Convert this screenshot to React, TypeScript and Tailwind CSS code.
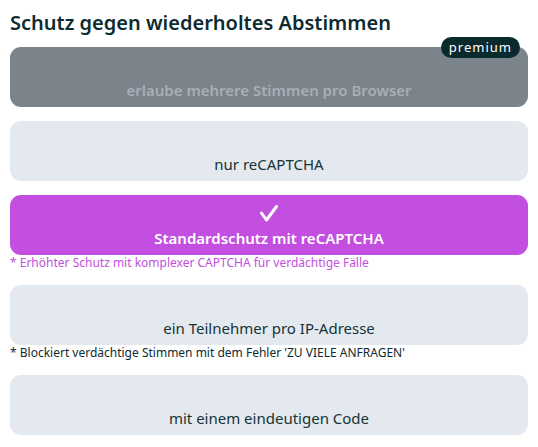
type Option = {
  label: string;
  note?: string;
  selected?: boolean;
  disabled?: boolean;
  premium?: boolean;
};

const OPTIONS: Option[] = [
  { label: "erlaube mehrere Stimmen pro Browser", disabled: true, premium: true },
  { label: "nur reCAPTCHA" },
  {
    label: "Standardschutz mit reCAPTCHA",
    selected: true,
    note: "* Erhöhter Schutz mit komplexer CAPTCHA für verdächtige Fälle",
  },
  {
    label: "ein Teilnehmer pro IP-Adresse",
    note: "* Blockiert verdächtige Stimmen mit dem Fehler 'ZU VIELE ANFRAGEN'",
  },
  { label: "mit einem eindeutigen Code" },
];

function CheckMark() {
  return (
    <svg
      viewBox="0 0 20 20"
      className="mb-[4px] h-[20px] w-[20px]"
      fill="none"
      stroke="currentColor"
      strokeWidth={3}
      strokeLinecap="round"
      strokeLinejoin="round"
    >
      <polyline points="2.5,10 7.5,17 17.5,3.5" />
    </svg>
  );
}

export default function App() {
  return (
    <div
      className="min-h-screen bg-white px-[10px] pt-[9px] text-[#0d2b30]"
      style={{ fontFamily: '"Noto Sans", "Open Sans", sans-serif' }}
    >
      <h2 className="text-[20px] font-semibold leading-[28px]">
        Schutz gegen wiederholtes Abstimmen
      </h2>

      <div className="mt-[10px] flex flex-col">
        {OPTIONS.map((opt) => (
          <div key={opt.label} className="mb-[14px]">
            <div
              className={
                "relative flex h-[60px] flex-col items-center justify-end rounded-[11px] pb-[6px] " +
                (opt.selected
                  ? "bg-[#c34fe0] text-white"
                  : opt.disabled
                  ? "bg-[#7b838b] text-[#a9afb5]"
                  : "bg-[#e4e9f0] text-[#163336]")
              }
            >
              {opt.premium && (
                <span className="absolute right-[8px] top-[-10px] rounded-full bg-[#0b2a2e] px-[8px] text-[13px] leading-[21px] tracking-[1px] text-white">
                  premium
                </span>
              )}
              {opt.selected && <CheckMark />}
              <span
                className={
                  "text-[15px] leading-[22px] " +
                  (opt.selected || opt.disabled ? "font-semibold" : "font-normal")
                }
              >
                {opt.label}
              </span>
            </div>
            {opt.note && (
              <p
                className={
                  "text-[12px] leading-[16px] " +
                  (opt.selected ? "text-[#c34fe0]" : "text-[#0d2b30]")
                }
              >
                {opt.note}
              </p>
            )}
          </div>
        ))}
      </div>
    </div>
  );
}
